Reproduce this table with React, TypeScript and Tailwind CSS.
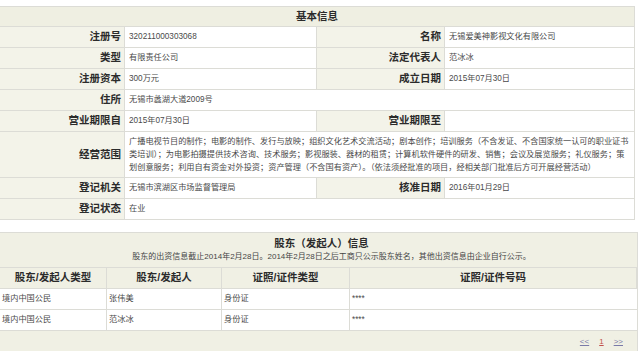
import React from 'react';

const cjk = '"Liberation Sans", "Noto Sans CJK SC", sans-serif';

type Row =
  | { kind: 'pair'; l1: string; v1: string; l2: string; v2: string }
  | { kind: 'wide'; l1: string; v1: string; tall?: boolean };

const rows: Row[] = [
  { kind: 'pair', l1: '注册号', v1: '320211000303068', l2: '名称', v2: '无锡爱美神影视文化有限公司' },
  { kind: 'pair', l1: '类型', v1: '有限责任公司', l2: '法定代表人', v2: '范冰冰' },
  { kind: 'pair', l1: '注册资本', v1: '300万元', l2: '成立日期', v2: '2015年07月30日' },
  { kind: 'wide', l1: '住所', v1: '无锡市蠡湖大道2009号' },
  { kind: 'pair', l1: '营业期限自', v1: '2015年07月30日', l2: '营业期限至', v2: '' },
  {
    kind: 'wide',
    l1: '经营范围',
    tall: true,
    v1: '广播电视节目的制作；电影的制作、发行与放映；组织文化艺术交流活动；剧本创作；培训服务（不含发证、不含国家统一认可的职业证书类培训）；为电影拍摄提供技术咨询、技术服务；影视服装、器材的租赁；计算机软件硬件的研发、销售；会议及展览服务；礼仪服务；策划创意服务；利用自有资金对外投资；资产管理（不含国有资产）。（依法须经批准的项目，经相关部门批准后方可开展经营活动）',
  },
  { kind: 'pair', l1: '登记机关', v1: '无锡市滨湖区市场监督管理局', l2: '核准日期', v2: '2016年01月29日' },
  { kind: 'wide', l1: '登记状态', v1: '在业' },
];

const shareholders = [
  { type: '境内中国公民', name: '张伟美', cert: '身份证', no: '****' },
  { type: '境内中国公民', name: '范冰冰', cert: '身份证', no: '****' },
];

const Label: React.FC<{ text: string; tall?: boolean }> = ({ text, tall }) => (
  <div
    className={`${tall ? 'h-[46px]' : 'h-[21px]'} flex items-center justify-end pr-[3px] bg-[#f3f3e9] border-b border-r border-[#dcdcd6] text-[10.5px] font-bold text-[#2b2b2b]`}
  >
    {text}
  </div>
);

const Value: React.FC<{ text: string; wide?: boolean; tall?: boolean }> = ({ text, wide, tall }) => (
  <div
    className={`${wide ? 'col-span-3' : ''} ${tall ? 'h-[46px] leading-[13px] pr-[4px]' : 'h-[21px]'} flex items-center pl-[4px] bg-white border-b border-r border-[#dcdcd6] text-[8.2px] text-[#4a4a4a]`}
  >
    <span>{text}</span>
  </div>
);

const App: React.FC = () => {
  return (
    <div className="w-[640px] h-[351px] bg-white overflow-hidden" style={{ fontFamily: cjk }}>
      <div className="pt-[6px]">
        <div className="grid grid-cols-[125px_192px_128px_190px] w-[635px]">
          <div className="col-span-4 h-[21px] flex items-center justify-center bg-[#efefe2] border-t border-b border-r border-[#dcdcd6] text-[10.5px] font-bold text-[#2b2b2b]">
            基本信息
          </div>
          {rows.map((r) =>
            r.kind === 'pair' ? (
              <React.Fragment key={r.l1}>
                <Label text={r.l1} />
                <Value text={r.v1} />
                <Label text={r.l2} />
                <Value text={r.v2} />
              </React.Fragment>
            ) : (
              <React.Fragment key={r.l1}>
                <Label text={r.l1} tall={r.tall} />
                <Value text={r.v1} wide tall={r.tall} />
              </React.Fragment>
            )
          )}
        </div>
      </div>

      <div className="mt-[12px] w-[638px] bg-[#f0f0e4] border-t border-r border-[#dcdcd6]">
        <div className="h-[34px] flex flex-col items-center justify-center">
          <div className="text-[10.5px] font-bold text-[#2b2b2b] leading-[13px] pl-[6px]">股东（发起人）信息</div>
          <div className="text-[8px] text-[#444] leading-[12px] mt-[1px] pl-[26px]">
            股东的出资信息截止2014年2月28日。2014年2月28日之后工商只公示股东姓名，其他出资信息由企业自行公示。
          </div>
        </div>
        <div className="grid grid-cols-[107px_115px_128px_287px] border-t border-[#dcdcd6]">
          {['股东/发起人类型', '股东/发起人', '证照/证件类型', '证照/证件号码'].map((h) => (
            <div
              key={h}
              className="h-[21px] flex items-center justify-center border-b border-r border-[#dcdcd6] text-[10.5px] font-bold text-[#2b2b2b] last:border-r-0"
            >
              {h}
            </div>
          ))}
          {shareholders.map((s) => (
            <React.Fragment key={s.name}>
              {[s.type, s.name, s.cert, s.no].map((c, i) => (
                <div
                  key={i}
                  className={`h-[21px] flex items-center pl-[2px] bg-white border-b border-[#dcdcd6] text-[8.2px] text-[#4a4a4a] ${i < 3 ? 'border-r' : ''}`}
                >
                  {c}
                </div>
              ))}
            </React.Fragment>
          ))}
        </div>
        <div className="h-[21px] flex items-center justify-end gap-[10px] pr-[14px] text-[8px]">
          <span className="underline text-[#7a7aa8]">&lt;&lt;</span>
          <span className="underline text-[#c0504d]">1</span>
          <span className="underline text-[#7a7aa8]">&gt;&gt;</span>
        </div>
      </div>
    </div>
  );
};

export default App;
